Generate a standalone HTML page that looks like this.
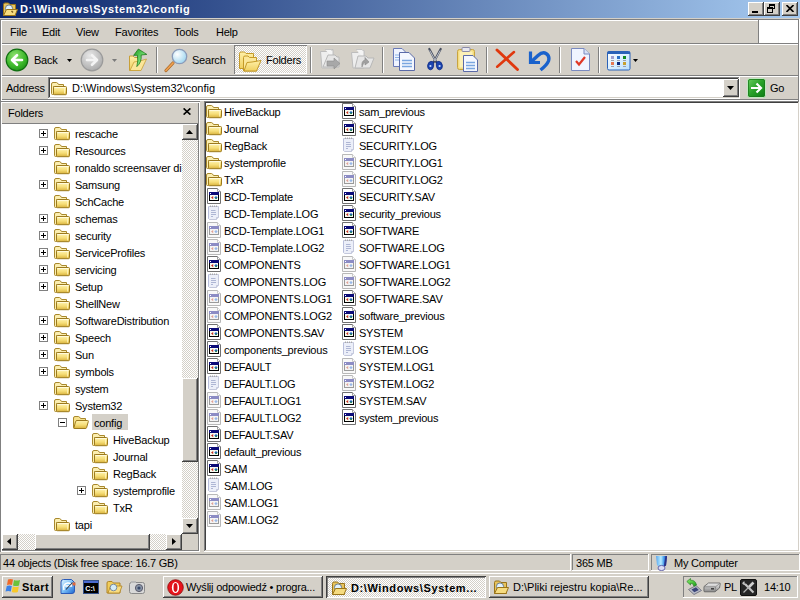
<!DOCTYPE html>
<html><head><meta charset="utf-8">
<style>
html,body{margin:0;padding:0;}
body{width:800px;height:600px;overflow:hidden;position:relative;background:#d4d0c8;font-family:"Liberation Sans", sans-serif;font-size:11px;color:#000;}
div,span,svg{position:absolute;box-sizing:border-box;}
.t{white-space:nowrap;line-height:15px;letter-spacing:-0.22px;}
.ic{width:16px;height:16px;}
</style></head><body>
<svg width="0" height="0" style="position:absolute">
<defs>
<linearGradient id="fg" x1="0" y1="0" x2="0" y2="1"><stop offset="0" stop-color="#fff3b0"/><stop offset=".55" stop-color="#f6de78"/><stop offset="1" stop-color="#d9b23c"/></linearGradient>
<linearGradient id="fgh" x1="0" y1="0" x2="1" y2="0"><stop offset="0" stop-color="#f6dc78"/><stop offset=".5" stop-color="#fff2b0"/><stop offset="1" stop-color="#e9c550"/></linearGradient>
<symbol id="fold" viewBox="0 0 16 16">
<path d="M0.5 4 V13.5 Q0.5 14.5 1.5 14.5 H2.5 V6.5 H12.5 V4.5 H7.5 L6.5 3 Q6 2.5 5.5 2.5 H2 Q0.5 2.5 0.5 4Z" fill="#fbeeb0" stroke="#a8882c"/>
<rect x="2.5" y="6.5" width="13" height="8.2" rx="1" fill="url(#fg)" stroke="#9c7a1e"/>
<path d="M3.5 7.6 H14.5" stroke="#fffbe0"/>
<path d="M13.5 8 V13.5" stroke="#fff5c0" stroke-width=".8"/>
</symbol>
<symbol id="reg" viewBox="0 0 16 16">
<path d="M1.5 0.5 H11.5 L14.5 3.5 V15.5 H1.5Z" fill="#fff" stroke="#707070"/>
<path d="M11.5 .5 V3.5 H14.5" fill="#fff" stroke="#a0a0a0"/>
<rect x="3.5" y="4.5" width="9" height="8" fill="#f6faf0" stroke="#000"/>
<rect x="3" y="4" width="10" height="3" fill="#0c0c78"/>
<rect x="4" y="5" width="1" height="1" fill="#fff"/>
<path d="M5 9.6 L7.2 8 V11.2Z" fill="#c83020"/>
<path d="M10 8 L11.7 9.6 L10 11.2 L8.3 9.6Z" fill="#2060d0"/>
<rect x="9.4" y="9.6" width="1.4" height="1.4" fill="#208a30"/>
</symbol>
<symbol id="regf" viewBox="0 0 16 16">
<path d="M1.5 0.5 H11.5 L14.5 3.5 V15.5 H1.5Z" fill="#f8f8f8" stroke="#b8b8b8"/>
<path d="M11.5 .5 V3.5 H14.5" fill="#fff" stroke="#c8c8c8"/>
<rect x="3.5" y="4.5" width="9" height="8" fill="#f4f4f4" stroke="#9a9a9a"/>
<rect x="3" y="4" width="10" height="3" fill="#8c8cc4"/>
<rect x="4" y="5" width="1" height="1" fill="#fff"/>
<path d="M5 9.6 L7.2 8 V11.2Z" fill="#e0a094"/>
<path d="M10 8 L11.7 9.6 L10 11.2 L8.3 9.6Z" fill="#98b8e8"/>
</symbol>
<symbol id="txt" viewBox="0 0 16 16">
<path d="M2.5 1.5 H12.5 V12.5 L10.5 14.5 H3.5 L2.5 13.5Z" fill="#eceff9" stroke="#c4c8dc"/>
<path d="M2.5 2 V13.5" stroke="#b8bedb"/>
<path d="M4.5 0.5 V2 M6.5 0.5 V2 M8.5 0.5 V2 M10.5 0.5 V2" stroke="#a8a8a8"/>
<path d="M5 5.5 H9.5 M5 7.5 H10 M5 9.5 H10 M5 11.5 H7" stroke="#aeb6d4"/>
<path d="M10.5 14.5 V12.5 H12.5" fill="#dfe3f2" stroke="#c4c8dc"/>
</symbol>
</defs></svg>
<div style="left:0;top:0;width:800px;height:18px;background:linear-gradient(to right,#0a246a,#a6caf0);"></div><svg style="left:2px;top:1px" width="16" height="16" viewBox="0 0 16 16"><path d="M1.5 3.5 Q1.5 2 3 2 H6.5 L8 3.5 H13.5 V14.5 H1.5Z" fill="#e8c45c" stroke="#9a7418"/><circle cx="7" cy="7.5" r="3.6" fill="#dff2ff" stroke="#6a7a8a"/><path d="M1.5 14.5 L4.5 8.5 H15.5 L13 14.5Z" fill="#f6dc80" stroke="#9a7418"/><path d="M9.5 10 L11 11.5" stroke="#7a5a18" stroke-width="1.4"/></svg><div class="t" style="left:20px;top:2px;color:#fff;font-weight:bold;font-size:11px;letter-spacing:0.66px">D:\Windows\System32\config</div><div style="left:748px;top:2px;width:16px;height:14px;background:#d4d0c8;box-shadow: inset -1px -1px #404040, inset 1px 1px #fff, inset -2px -2px #808080, inset 2px 2px #d4d0c8;"><div style="left:4px;top:9px;width:6px;height:2px;background:#000"></div></div><div style="left:764px;top:2px;width:16px;height:14px;background:#d4d0c8;box-shadow: inset -1px -1px #404040, inset 1px 1px #fff, inset -2px -2px #808080, inset 2px 2px #d4d0c8;"><div style="left:5px;top:2px;width:6px;height:5px;border:1px solid #000;border-top-width:2px"></div><div style="left:3px;top:5px;width:6px;height:6px;border:1px solid #000;border-top-width:2px;background:#d4d0c8"></div></div><div style="left:782px;top:2px;width:16px;height:14px;background:#d4d0c8;box-shadow: inset -1px -1px #404040, inset 1px 1px #fff, inset -2px -2px #808080, inset 2px 2px #d4d0c8;"><svg style="left:4px;top:3px" width="8" height="7" viewBox="0 0 8 7"><path d="M0.5 0 L7.5 7 M7.5 0 L0.5 7" stroke="#000" stroke-width="1.6"/></svg></div><div style="left:0;top:18px;width:800px;height:582px;background:#d4d0c8"></div><div style="left:0px;top:19px;width:800px;height:1px;background:#808080"></div><div style="left:0px;top:20px;width:800px;height:1px;background:#fff"></div><div style="left:0px;top:43px;width:800px;height:1px;background:#808080"></div><div style="left:0px;top:44px;width:800px;height:1px;background:#fff"></div><div style="left:0px;top:75px;width:800px;height:1px;background:#808080"></div><div style="left:0px;top:76px;width:800px;height:1px;background:#fff"></div><div style="left:0px;top:99px;width:800px;height:1px;background:#808080"></div><div style="left:0px;top:100px;width:800px;height:1px;background:#fff"></div><div style="left:0px;top:19px;width:1px;height:82px;background:#808080"></div><div style="left:1px;top:20px;width:1px;height:80px;background:#fff"></div><div style="left:798px;top:19px;width:1px;height:82px;background:#808080"></div><div style="left:799px;top:19px;width:1px;height:82px;background:#fff"></div><div style="left:759px;top:20px;width:39px;height:23px;background:#fff"></div><div style="left:758px;top:20px;width:1px;height:23px;background:#808080"></div><div class="t" style="left:10px;top:25px">File</div><div class="t" style="left:42px;top:25px">Edit</div><div class="t" style="left:76px;top:25px">View</div><div class="t" style="left:115px;top:25px">Favorites</div><div class="t" style="left:174px;top:25px">Tools</div><div class="t" style="left:216px;top:25px">Help</div><svg style="left:5px;top:48px" width="24" height="24" viewBox="0 0 24 24"><defs><radialGradient id="gb" cx=".4" cy=".3" r=".8"><stop offset="0" stop-color="#8fe070"/><stop offset=".6" stop-color="#3cb82a"/><stop offset="1" stop-color="#1a8a14"/></radialGradient></defs><circle cx="12" cy="12" r="10.8" fill="url(#gb)" stroke="#0f6e10" stroke-width="1.2"/><path d="M17 12 H8 M12 7.2 L7 12 L12 16.8" stroke="#fff" stroke-width="2.6" fill="none" stroke-linecap="round" stroke-linejoin="round"/></svg><div class="t" style="left:34px;top:53px">Back</div><svg style="left:67px;top:59px" width="5" height="3"><path d="M0 0H5L2.5 3Z" fill="#000"/></svg><svg style="left:80px;top:48px" width="24" height="24" viewBox="0 0 24 24"><defs><radialGradient id="gf" cx=".4" cy=".3" r=".8"><stop offset="0" stop-color="#e8e8e8"/><stop offset="1" stop-color="#a4a4a4"/></radialGradient></defs><circle cx="12" cy="12" r="10.8" fill="url(#gf)" stroke="#9a9a9a" stroke-width="1.2"/><path d="M7 12 H16 M12 7.2 L17 12 L12 16.8" stroke="#f4f4f4" stroke-width="2.6" fill="none" stroke-linecap="round" stroke-linejoin="round"/></svg><svg style="left:112px;top:59px" width="5" height="3"><path d="M0 0H5L2.5 3Z" fill="#7a7a7a"/></svg><svg style="left:128px;top:48px" width="20" height="24" viewBox="0 0 20 24"><defs><linearGradient id="ga" x1="0" y1="0" x2="1" y2="1"><stop offset="0" stop-color="#1a9a1a"/><stop offset=".6" stop-color="#7ae07a"/><stop offset="1" stop-color="#108010"/></linearGradient><linearGradient id="gyf" x1="0" y1="0" x2="0" y2="1"><stop offset="0" stop-color="#fff0a8"/><stop offset="1" stop-color="#f0d060"/></linearGradient></defs><path d="M1.5 8 H5 L6.5 9.5 H11.5 V22.5 H1.5Z" fill="url(#gyf)" stroke="#c8a038"/><path d="M2 22.5 L6 14 L12 13 L18.5 11 L13 22.5Z" fill="#fbe69a" stroke="#c8a038" stroke-width=".8"/><path d="M10.4 1 L5.6 7.4 L9.4 7.2 Q10.4 13 8.8 18.6 Q13.8 14.5 13.2 7 L18.8 6.4 Z" fill="url(#ga)" stroke="#0e6e0e" stroke-width=".7"/></svg><div style="left:156px;top:47px;width:2px;height:26px;border-left:1px solid #808080;border-right:1px solid #fff"></div><svg style="left:163px;top:47px" width="26" height="26" viewBox="0 0 26 26"><defs><radialGradient id="gl" cx=".35" cy=".35" r=".7"><stop offset="0" stop-color="#fff"/><stop offset="1" stop-color="#9fd6f0"/></radialGradient></defs><path d="M3 23.5 L10 16" stroke="#a86a2a" stroke-width="3.2" stroke-linecap="round"/><path d="M3 23.5 L10 16" stroke="#f0a050" stroke-width="1.8" stroke-linecap="round"/><circle cx="16.5" cy="9.5" r="7.2" fill="url(#gl)" stroke="#8a9ab8" stroke-width="1.3"/></svg><div class="t" style="left:192px;top:53px">Search</div><div style="left:234px;top:45px;width:73px;height:29px;background: repeating-conic-gradient(#fff 0 25%, #d4d0c8 0 50%) 0 0/2px 2px; box-shadow: inset 1px 1px #808080, inset -1px -1px #fff;"></div><svg style="left:238px;top:49px" width="24" height="24" viewBox="0 0 24 24"><path d="M1.5 4.5 Q1.5 3 3 3 H6.5 L8 4.5 H15.5 V19.5 H1.5Z" fill="url(#gyf)" stroke="#c49a28"/><path d="M5.5 8.5 Q5.5 7 7 7 H10 L11.5 8.5 H18.5 V22 H5.5Z" fill="#fbe79a" stroke="#c49a28"/><path d="M6 22 L9 13.5 L14 13 L23 11.5 L18.5 22Z" fill="url(#gyf)" stroke="#c49a28"/></svg><div class="t" style="left:266px;top:53px">Folders</div><div style="left:310px;top:47px;width:2px;height:26px;border-left:1px solid #808080;border-right:1px solid #fff"></div><svg style="left:319px;top:48px" width="24" height="23" viewBox="0 0 24 23"><path d="M1.5 3.5 H8 L10 1.5 H14 V20 H3 Z" fill="#eeeeee" stroke="#bdbdbd"/><path d="M6 1.5 H12 L14 3.5 V10" fill="#f4f4f4" stroke="#c4c4c4"/><path d="M9 7 H16 L18 9 H20 V19 H4Z" fill="#e6e6e6" stroke="#b8b8b8"/><path d="M8 13 H15 V10 L21 15.5 L15 21 V18 H8Z" fill="#a8a8a8" stroke="#8a8a8a" stroke-width=".6"/></svg><svg style="left:350px;top:48px" width="25" height="23" viewBox="0 0 25 23"><path d="M1.5 4.5 H8 L10 2.5 H14 V20 H3 Z" fill="#eeeeee" stroke="#bdbdbd"/><path d="M6 1.5 H12 L14 3.5 V10" fill="#f4f4f4" stroke="#c4c4c4"/><path d="M8 8 H16 L18 10 H24 L20 20 H5Z" fill="#e6e6e6" stroke="#b8b8b8"/><path d="M12 19 Q11 13 15 12 V9.5 L19 14 L15 17 V14.5 Q13 15 12 19Z" fill="#a0a0a0" stroke="#888" stroke-width=".6"/></svg><div style="left:382px;top:47px;width:2px;height:26px;border-left:1px solid #808080;border-right:1px solid #fff"></div><svg style="left:392px;top:47px" width="24" height="25" viewBox="0 0 24 25"><path d="M1.5 1.5 H10 L14.5 6 V19.5 H1.5Z" fill="#f0f4ff" stroke="#6a7ab8"/><path d="M3 8 H11 M3 10.5 H11 M3 13 H11" stroke="#8cb4e8"/><path d="M7.5 5.5 H17 L22.5 11 V23.5 H7.5Z" fill="#f4f7ff" stroke="#5a6aa8"/><path d="M10 13.5 H20 M10 16.5 H20 M10 19.5 H20" stroke="#7aa6e0" stroke-width="1.4"/></svg><svg style="left:425px;top:47px" width="20" height="25" viewBox="0 0 20 25"><path d="M4.3 2 L11.2 15 M15.7 2 L8.8 15" stroke="#4a5060" stroke-width="2.2" fill="none" stroke-linecap="round"/><path d="M4.8 3.5 L10.6 14 M15.2 3.5 L9.4 14" stroke="#e8eef8" stroke-width=".7" fill="none"/><path d="M8.6 15 Q6 13.5 3.8 15.5 Q1.6 18.5 3.2 21.6 Q5.2 23.8 7.4 22 Q9.2 20 8.6 15Z" fill="#1b44b0" stroke="#0e2a80" stroke-width=".8"/><path d="M11.4 15 Q14 13.5 16.2 15.5 Q18.4 18.5 16.8 21.6 Q14.8 23.8 12.6 22 Q10.8 20 11.4 15Z" fill="#1b44b0" stroke="#0e2a80" stroke-width=".8"/><circle cx="5.4" cy="19" r="1.1" fill="#c8dcff"/><circle cx="14.6" cy="19" r="1.1" fill="#c8dcff"/></svg><svg style="left:456px;top:46px" width="23" height="27" viewBox="0 0 23 27"><rect x="1.5" y="3.5" width="17" height="20" rx="2" fill="#f4dc80" stroke="#c8a440"/><rect x="3.5" y="5.5" width="13" height="16" fill="#fbf0b8"/><rect x="6" y="1.5" width="8" height="4" rx="1" fill="#e8e8f0" stroke="#8a8aa8"/><path d="M7.5 9.5 H17 L21.5 14 V25.5 H7.5Z" fill="#f4f7ff" stroke="#5a6aa8"/><path d="M10 16.5 H19 M10 19.5 H19 M10 22.5 H19" stroke="#7aa6e0" stroke-width="1.4"/></svg><div style="left:486px;top:47px;width:2px;height:26px;border-left:1px solid #808080;border-right:1px solid #fff"></div><svg style="left:495px;top:48px" width="24" height="23" viewBox="0 0 24 23"><path d="M2 2 L22.5 21.5" stroke="#e0380e" stroke-width="2.9" stroke-linecap="round"/><path d="M19 4 L2.2 18.8" stroke="#e0380e" stroke-width="2.5" stroke-linecap="round"/></svg><svg style="left:527px;top:48px" width="24" height="24" viewBox="0 0 24 24"><path d="M3.5 3.5 V14.5 H13" stroke="#1a62cc" stroke-width="3.2" fill="none" stroke-linejoin="miter"/><path d="M4.5 13.5 L11 7.5 Q15.5 3.5 19 5.5 Q23 8 21.5 13 Q20 17 13.5 22" stroke="#1a62cc" stroke-width="3.4" fill="none"/></svg><div style="left:559px;top:47px;width:2px;height:26px;border-left:1px solid #808080;border-right:1px solid #fff"></div><svg style="left:570px;top:47px" width="21" height="25" viewBox="0 0 21 25"><path d="M1.5 1.5 H14 L19.5 7 V23.5 H1.5Z" fill="#f0f4ff" stroke="#7a8ac0"/><path d="M14 1.5 V7 H19.5" fill="#d8e2f8" stroke="#7a8ac0"/><path d="M6 14 L9 17.5 L15 10" stroke="#e03828" stroke-width="2.2" fill="none"/></svg><div style="left:598px;top:47px;width:2px;height:26px;border-left:1px solid #808080;border-right:1px solid #fff"></div><svg style="left:606px;top:50px" width="26" height="21" viewBox="0 0 26 21"><defs><linearGradient id="gvw" x1="0" y1="0" x2="1" y2="1"><stop offset="0" stop-color="#fff"/><stop offset="1" stop-color="#b8e0ff"/></linearGradient></defs><rect x="1.5" y="1.5" width="22.5" height="18.5" rx="1.5" fill="url(#gvw)" stroke="#2a62b8"/><rect x="1.5" y="1.5" width="22.5" height="2.5" fill="#2a62b8"/><rect x="5" y="6" width="3" height="3" fill="#a0a0d0"/><rect x="11" y="6" width="3" height="3" fill="#2a70c8"/><rect x="17" y="6" width="3" height="3" fill="#108a20"/><rect x="5" y="12" width="3" height="3" fill="#e87850"/><rect x="11" y="12" width="3" height="3" fill="#0a2a80"/><rect x="17" y="12" width="3" height="3" fill="#c8a030"/><path d="M5 10.5 H8 M11 10.5 H14 M17 10.5 H20 M5 16.5 H8 M11 16.5 H14 M17 16.5 H20" stroke="#a0a0a8"/></svg><svg style="left:633px;top:59px" width="5" height="3"><path d="M0 0H5L2.5 3Z" fill="#000"/></svg><div class="t" style="left:6px;top:81px">Address</div><div style="left:48px;top:77px;width:692px;height:22px;background:#fff;box-shadow: inset -1px -1px #fff, inset 1px 1px #808080, inset -2px -2px #d4d0c8, inset 2px 2px #404040;"></div><svg class="ic" style="left:51px;top:80px" viewBox="0 0 16 16"><use href="#fold"/></svg><div class="t" style="left:72px;top:81px;letter-spacing:0">D:\Windows\System32\config</div><div style="left:723px;top:79px;width:16px;height:18px;background:#d4d0c8;box-shadow: inset -1px -1px #404040, inset 1px 1px #fff, inset -2px -2px #808080, inset 2px 2px #d4d0c8;"><svg style="left:4px;top:7px" width="7" height="4"><path d="M0 0H7L3.5 4Z" fill="#000"/></svg></div><svg style="left:747px;top:78px" width="19" height="20" viewBox="0 0 19 20"><defs><linearGradient id="gg" x1="0" y1="0" x2="1" y2="1"><stop offset="0" stop-color="#6ad060"/><stop offset=".5" stop-color="#28a028"/><stop offset="1" stop-color="#0a7a14"/></linearGradient></defs><rect x=".5" y=".5" width="18" height="19" rx="2.5" fill="url(#gg)" stroke="#c0e8c0"/><rect x="1.5" y="1.5" width="16" height="17" rx="1.5" fill="none" stroke="#1a7a1a" stroke-width=".8"/><path d="M4 10 H14 M9.5 5.5 L14 10 L9.5 14.5" stroke="#fff" stroke-width="2.2" fill="none"/></svg><div class="t" style="left:770px;top:81px">Go</div><div style="left:0;top:101px;width:200px;height:451px;box-shadow: inset 1px 1px #808080, inset -1px -1px #fff, inset 2px 2px #fff, inset -2px -2px #808080;"></div><div class="t" style="left:8px;top:106px">Folders</div><svg style="left:183px;top:108px" width="8" height="7"><path d="M0.6 0.4 L7.4 6.6 M7.4 0.4 L0.6 6.6" stroke="#000" stroke-width="1.6"/></svg><div style="left:2px;top:123px;width:196px;height:1px;background:#808080"></div><div style="left:2px;top:124px;width:180px;height:410px;background:#fff"></div><div style="left:2px;top:124px;width:180px;height:410px;overflow:hidden"><div style="left:37px;top:5px;width:9px;height:9px;border:1px solid #808080;background:#fff"><div style="left:1px;top:3px;width:5px;height:1px;background:#000"></div><div style="left:3px;top:1px;width:1px;height:5px;background:#000"></div></div><svg class="ic" style="left:52px;top:1px"><use href="#fold"/></svg><div class="t" style="left:73px;top:3px">rescache</div><div style="left:37px;top:22px;width:9px;height:9px;border:1px solid #808080;background:#fff"><div style="left:1px;top:3px;width:5px;height:1px;background:#000"></div><div style="left:3px;top:1px;width:1px;height:5px;background:#000"></div></div><svg class="ic" style="left:52px;top:18px"><use href="#fold"/></svg><div class="t" style="left:73px;top:20px">Resources</div><svg class="ic" style="left:52px;top:35px"><use href="#fold"/></svg><div class="t" style="left:73px;top:37px">ronaldo screensaver di</div><div style="left:37px;top:56px;width:9px;height:9px;border:1px solid #808080;background:#fff"><div style="left:1px;top:3px;width:5px;height:1px;background:#000"></div><div style="left:3px;top:1px;width:1px;height:5px;background:#000"></div></div><svg class="ic" style="left:52px;top:52px"><use href="#fold"/></svg><div class="t" style="left:73px;top:54px">Samsung</div><svg class="ic" style="left:52px;top:69px"><use href="#fold"/></svg><div class="t" style="left:73px;top:71px">SchCache</div><div style="left:37px;top:90px;width:9px;height:9px;border:1px solid #808080;background:#fff"><div style="left:1px;top:3px;width:5px;height:1px;background:#000"></div><div style="left:3px;top:1px;width:1px;height:5px;background:#000"></div></div><svg class="ic" style="left:52px;top:86px"><use href="#fold"/></svg><div class="t" style="left:73px;top:88px">schemas</div><div style="left:37px;top:107px;width:9px;height:9px;border:1px solid #808080;background:#fff"><div style="left:1px;top:3px;width:5px;height:1px;background:#000"></div><div style="left:3px;top:1px;width:1px;height:5px;background:#000"></div></div><svg class="ic" style="left:52px;top:103px"><use href="#fold"/></svg><div class="t" style="left:73px;top:105px">security</div><div style="left:37px;top:124px;width:9px;height:9px;border:1px solid #808080;background:#fff"><div style="left:1px;top:3px;width:5px;height:1px;background:#000"></div><div style="left:3px;top:1px;width:1px;height:5px;background:#000"></div></div><svg class="ic" style="left:52px;top:120px"><use href="#fold"/></svg><div class="t" style="left:73px;top:122px">ServiceProfiles</div><div style="left:37px;top:141px;width:9px;height:9px;border:1px solid #808080;background:#fff"><div style="left:1px;top:3px;width:5px;height:1px;background:#000"></div><div style="left:3px;top:1px;width:1px;height:5px;background:#000"></div></div><svg class="ic" style="left:52px;top:137px"><use href="#fold"/></svg><div class="t" style="left:73px;top:139px">servicing</div><div style="left:37px;top:158px;width:9px;height:9px;border:1px solid #808080;background:#fff"><div style="left:1px;top:3px;width:5px;height:1px;background:#000"></div><div style="left:3px;top:1px;width:1px;height:5px;background:#000"></div></div><svg class="ic" style="left:52px;top:154px"><use href="#fold"/></svg><div class="t" style="left:73px;top:156px">Setup</div><svg class="ic" style="left:52px;top:171px"><use href="#fold"/></svg><div class="t" style="left:73px;top:173px">ShellNew</div><div style="left:37px;top:192px;width:9px;height:9px;border:1px solid #808080;background:#fff"><div style="left:1px;top:3px;width:5px;height:1px;background:#000"></div><div style="left:3px;top:1px;width:1px;height:5px;background:#000"></div></div><svg class="ic" style="left:52px;top:188px"><use href="#fold"/></svg><div class="t" style="left:73px;top:190px">SoftwareDistribution</div><div style="left:37px;top:209px;width:9px;height:9px;border:1px solid #808080;background:#fff"><div style="left:1px;top:3px;width:5px;height:1px;background:#000"></div><div style="left:3px;top:1px;width:1px;height:5px;background:#000"></div></div><svg class="ic" style="left:52px;top:205px"><use href="#fold"/></svg><div class="t" style="left:73px;top:207px">Speech</div><div style="left:37px;top:226px;width:9px;height:9px;border:1px solid #808080;background:#fff"><div style="left:1px;top:3px;width:5px;height:1px;background:#000"></div><div style="left:3px;top:1px;width:1px;height:5px;background:#000"></div></div><svg class="ic" style="left:52px;top:222px"><use href="#fold"/></svg><div class="t" style="left:73px;top:224px">Sun</div><div style="left:37px;top:243px;width:9px;height:9px;border:1px solid #808080;background:#fff"><div style="left:1px;top:3px;width:5px;height:1px;background:#000"></div><div style="left:3px;top:1px;width:1px;height:5px;background:#000"></div></div><svg class="ic" style="left:52px;top:239px"><use href="#fold"/></svg><div class="t" style="left:73px;top:241px">symbols</div><svg class="ic" style="left:52px;top:256px"><use href="#fold"/></svg><div class="t" style="left:73px;top:258px">system</div><div style="left:37px;top:277px;width:9px;height:9px;border:1px solid #808080;background:#fff"><div style="left:1px;top:3px;width:5px;height:1px;background:#000"></div><div style="left:3px;top:1px;width:1px;height:5px;background:#000"></div></div><svg class="ic" style="left:52px;top:273px"><use href="#fold"/></svg><div class="t" style="left:73px;top:275px">System32</div><div style="left:56px;top:294px;width:9px;height:9px;border:1px solid #808080;background:#fff"><div style="left:1px;top:3px;width:5px;height:1px;background:#000"></div></div><div style="left:90px;top:290px;width:36px;height:16px;background:#d4d0c8"></div><svg class="ic" style="left:71px;top:290px" viewBox="0 0 16 16"><path d="M0.5 4 V13.5 Q0.5 14.5 1.5 14.5 H12.5 V4.5 H7.5 L6.5 3 Q6 2.5 5.5 2.5 H2 Q0.5 2.5 0.5 4Z" fill="#f6e08a" stroke="#a8882c"/><path d="M1.5 14.5 Q0.8 14.5 1 13.5 L2.5 7.8 Q2.8 6.5 4 6.5 H14.5 Q15.6 6.5 15.3 7.6 L13.6 13.6 Q13.3 14.5 12.5 14.5Z" fill="url(#fg)" stroke="#9c7a1e"/></svg><div class="t" style="left:92px;top:292px">config</div><svg class="ic" style="left:90px;top:307px"><use href="#fold"/></svg><div class="t" style="left:111px;top:309px">HiveBackup</div><svg class="ic" style="left:90px;top:324px"><use href="#fold"/></svg><div class="t" style="left:111px;top:326px">Journal</div><svg class="ic" style="left:90px;top:341px"><use href="#fold"/></svg><div class="t" style="left:111px;top:343px">RegBack</div><div style="left:75px;top:362px;width:9px;height:9px;border:1px solid #808080;background:#fff"><div style="left:1px;top:3px;width:5px;height:1px;background:#000"></div><div style="left:3px;top:1px;width:1px;height:5px;background:#000"></div></div><svg class="ic" style="left:90px;top:358px"><use href="#fold"/></svg><div class="t" style="left:111px;top:360px">systemprofile</div><svg class="ic" style="left:90px;top:375px"><use href="#fold"/></svg><div class="t" style="left:111px;top:377px">TxR</div><svg class="ic" style="left:52px;top:392px"><use href="#fold"/></svg><div class="t" style="left:73px;top:394px">tapi</div></div><div style="left:182px;top:124px;width:16px;height:410px;background: repeating-conic-gradient(#fff 0 25%, #d4d0c8 0 50%) 0 0/2px 2px;"></div><div style="left:182px;top:124px;width:16px;height:16px;background:#d4d0c8;box-shadow: inset -1px -1px #404040, inset 1px 1px #fff, inset -2px -2px #808080, inset 2px 2px #d4d0c8;"><svg style="left:4px;top:6px" width="7" height="4"><path d="M0 4H7L3.5 0Z" fill="#000"/></svg></div><div style="left:182px;top:518px;width:16px;height:16px;background:#d4d0c8;box-shadow: inset -1px -1px #404040, inset 1px 1px #fff, inset -2px -2px #808080, inset 2px 2px #d4d0c8;"><svg style="left:4px;top:6px" width="7" height="4"><path d="M0 0H7L3.5 4Z" fill="#000"/></svg></div><div style="left:182px;top:378px;width:16px;height:84px;background:#d4d0c8;box-shadow: inset -1px -1px #404040, inset 1px 1px #fff, inset -2px -2px #808080, inset 2px 2px #d4d0c8;"></div><div style="left:2px;top:534px;width:180px;height:16px;background: repeating-conic-gradient(#fff 0 25%, #d4d0c8 0 50%) 0 0/2px 2px;"></div><div style="left:2px;top:534px;width:16px;height:16px;background:#d4d0c8;box-shadow: inset -1px -1px #404040, inset 1px 1px #fff, inset -2px -2px #808080, inset 2px 2px #d4d0c8;"><svg style="left:5px;top:4px" width="4" height="7"><path d="M4 0V7L0 3.5Z" fill="#000"/></svg></div><div style="left:166px;top:534px;width:16px;height:16px;background:#d4d0c8;box-shadow: inset -1px -1px #404040, inset 1px 1px #fff, inset -2px -2px #808080, inset 2px 2px #d4d0c8;"><svg style="left:6px;top:4px" width="4" height="7"><path d="M0 0V7L4 3.5Z" fill="#000"/></svg></div><div style="left:35px;top:534px;width:115px;height:16px;background:#d4d0c8;box-shadow: inset -1px -1px #404040, inset 1px 1px #fff, inset -2px -2px #808080, inset 2px 2px #d4d0c8;"></div><div style="left:182px;top:534px;width:16px;height:16px;background:#d4d0c8"></div><div style="left:204px;top:101px;width:596px;height:451px;background:#fff;box-shadow: inset -1px -1px #fff, inset 1px 1px #808080, inset -2px -2px #d4d0c8, inset 2px 2px #404040;"></div><svg class="ic" style="left:206px;top:103px"><use href="#fold"/></svg><div class="t" style="left:224px;top:105px">HiveBackup</div><svg class="ic" style="left:206px;top:120px"><use href="#fold"/></svg><div class="t" style="left:224px;top:122px">Journal</div><svg class="ic" style="left:206px;top:137px"><use href="#fold"/></svg><div class="t" style="left:224px;top:139px">RegBack</div><svg class="ic" style="left:206px;top:154px"><use href="#fold"/></svg><div class="t" style="left:224px;top:156px">systemprofile</div><svg class="ic" style="left:206px;top:171px"><use href="#fold"/></svg><div class="t" style="left:224px;top:173px">TxR</div><svg class="ic" style="left:206px;top:188px"><use href="#reg"/></svg><div class="t" style="left:224px;top:190px">BCD-Template</div><svg class="ic" style="left:206px;top:205px"><use href="#txt"/></svg><div class="t" style="left:224px;top:207px">BCD-Template.LOG</div><svg class="ic" style="left:206px;top:222px"><use href="#regf"/></svg><div class="t" style="left:224px;top:224px">BCD-Template.LOG1</div><svg class="ic" style="left:206px;top:239px"><use href="#regf"/></svg><div class="t" style="left:224px;top:241px">BCD-Template.LOG2</div><svg class="ic" style="left:206px;top:256px"><use href="#reg"/></svg><div class="t" style="left:224px;top:258px">COMPONENTS</div><svg class="ic" style="left:206px;top:273px"><use href="#txt"/></svg><div class="t" style="left:224px;top:275px">COMPONENTS.LOG</div><svg class="ic" style="left:206px;top:290px"><use href="#regf"/></svg><div class="t" style="left:224px;top:292px">COMPONENTS.LOG1</div><svg class="ic" style="left:206px;top:307px"><use href="#regf"/></svg><div class="t" style="left:224px;top:309px">COMPONENTS.LOG2</div><svg class="ic" style="left:206px;top:324px"><use href="#reg"/></svg><div class="t" style="left:224px;top:326px">COMPONENTS.SAV</div><svg class="ic" style="left:206px;top:341px"><use href="#reg"/></svg><div class="t" style="left:224px;top:343px">components_previous</div><svg class="ic" style="left:206px;top:358px"><use href="#reg"/></svg><div class="t" style="left:224px;top:360px">DEFAULT</div><svg class="ic" style="left:206px;top:375px"><use href="#txt"/></svg><div class="t" style="left:224px;top:377px">DEFAULT.LOG</div><svg class="ic" style="left:206px;top:392px"><use href="#regf"/></svg><div class="t" style="left:224px;top:394px">DEFAULT.LOG1</div><svg class="ic" style="left:206px;top:409px"><use href="#regf"/></svg><div class="t" style="left:224px;top:411px">DEFAULT.LOG2</div><svg class="ic" style="left:206px;top:426px"><use href="#reg"/></svg><div class="t" style="left:224px;top:428px">DEFAULT.SAV</div><svg class="ic" style="left:206px;top:443px"><use href="#reg"/></svg><div class="t" style="left:224px;top:445px">default_previous</div><svg class="ic" style="left:206px;top:460px"><use href="#reg"/></svg><div class="t" style="left:224px;top:462px">SAM</div><svg class="ic" style="left:206px;top:477px"><use href="#txt"/></svg><div class="t" style="left:224px;top:479px">SAM.LOG</div><svg class="ic" style="left:206px;top:494px"><use href="#regf"/></svg><div class="t" style="left:224px;top:496px">SAM.LOG1</div><svg class="ic" style="left:206px;top:511px"><use href="#regf"/></svg><div class="t" style="left:224px;top:513px">SAM.LOG2</div><svg class="ic" style="left:341px;top:103px"><use href="#reg"/></svg><div class="t" style="left:359px;top:105px">sam_previous</div><svg class="ic" style="left:341px;top:120px"><use href="#reg"/></svg><div class="t" style="left:359px;top:122px">SECURITY</div><svg class="ic" style="left:341px;top:137px"><use href="#txt"/></svg><div class="t" style="left:359px;top:139px">SECURITY.LOG</div><svg class="ic" style="left:341px;top:154px"><use href="#regf"/></svg><div class="t" style="left:359px;top:156px">SECURITY.LOG1</div><svg class="ic" style="left:341px;top:171px"><use href="#regf"/></svg><div class="t" style="left:359px;top:173px">SECURITY.LOG2</div><svg class="ic" style="left:341px;top:188px"><use href="#reg"/></svg><div class="t" style="left:359px;top:190px">SECURITY.SAV</div><svg class="ic" style="left:341px;top:205px"><use href="#reg"/></svg><div class="t" style="left:359px;top:207px">security_previous</div><svg class="ic" style="left:341px;top:222px"><use href="#reg"/></svg><div class="t" style="left:359px;top:224px">SOFTWARE</div><svg class="ic" style="left:341px;top:239px"><use href="#txt"/></svg><div class="t" style="left:359px;top:241px">SOFTWARE.LOG</div><svg class="ic" style="left:341px;top:256px"><use href="#regf"/></svg><div class="t" style="left:359px;top:258px">SOFTWARE.LOG1</div><svg class="ic" style="left:341px;top:273px"><use href="#regf"/></svg><div class="t" style="left:359px;top:275px">SOFTWARE.LOG2</div><svg class="ic" style="left:341px;top:290px"><use href="#reg"/></svg><div class="t" style="left:359px;top:292px">SOFTWARE.SAV</div><svg class="ic" style="left:341px;top:307px"><use href="#reg"/></svg><div class="t" style="left:359px;top:309px">software_previous</div><svg class="ic" style="left:341px;top:324px"><use href="#reg"/></svg><div class="t" style="left:359px;top:326px">SYSTEM</div><svg class="ic" style="left:341px;top:341px"><use href="#txt"/></svg><div class="t" style="left:359px;top:343px">SYSTEM.LOG</div><svg class="ic" style="left:341px;top:358px"><use href="#regf"/></svg><div class="t" style="left:359px;top:360px">SYSTEM.LOG1</div><svg class="ic" style="left:341px;top:375px"><use href="#regf"/></svg><div class="t" style="left:359px;top:377px">SYSTEM.LOG2</div><svg class="ic" style="left:341px;top:392px"><use href="#reg"/></svg><div class="t" style="left:359px;top:394px">SYSTEM.SAV</div><svg class="ic" style="left:341px;top:409px"><use href="#reg"/></svg><div class="t" style="left:359px;top:411px">system_previous</div><div style="left:0;top:554px;width:571px;height:17px;box-shadow: inset -1px -1px #fff, inset 1px 1px #808080;"></div><div class="t" style="left:3px;top:556px">44 objects (Disk free space: 16.7 GB)</div><div style="left:572px;top:554px;width:77px;height:17px;box-shadow: inset -1px -1px #fff, inset 1px 1px #808080;"></div><div class="t" style="left:576px;top:556px">365 MB</div><div style="left:651px;top:554px;width:149px;height:17px;box-shadow: inset -1px -1px #fff, inset 1px 1px #808080;"></div><svg style="left:655px;top:555px" width="13" height="16" viewBox="0 0 13 16"><defs><linearGradient id="gm" x1="0" y1="0" x2="1" y2="0"><stop offset="0" stop-color="#5aa8f0"/><stop offset=".45" stop-color="#b8ecff"/><stop offset=".75" stop-color="#3a90e8"/><stop offset="1" stop-color="#28328a"/></linearGradient></defs><path d="M1 1 H12 L11 10.5 L9 11.5 H3.5 L2 10Z" fill="url(#gm)"/><path d="M10.5 1 H12 L11 10.5 L9 12 V10Z" fill="#2a3088"/><ellipse cx="6.5" cy="13" rx="3.5" ry="2.6" fill="#dcdcf4" stroke="#4a4a9a" stroke-width=".8"/></svg><div class="t" style="left:674px;top:556px">My Computer</div><div style="left:0;top:572px;width:800px;height:28px;background:#d4d0c8;border-top:1px solid #d4d0c8;box-shadow: inset 0 1px #fff;"></div><div style="left:2px;top:576px;width:51px;height:22px;background:#d4d0c8;box-shadow: inset -1px -1px #404040, inset 1px 1px #fff, inset -2px -2px #808080, inset 2px 2px #d4d0c8;"></div><svg style="left:4px;top:578px" width="17" height="16" viewBox="0 0 17 16"><path d="M4 1.5 Q6.5 0.5 9 1.5 L8 7 Q5.5 6 3 7Z" fill="#f06a28"/><path d="M10 2 Q12.5 3 16 2 L15 7.5 Q12 8.5 9 7.5Z" fill="#6cc23a"/><path d="M2.8 8 Q5.3 7 7.8 8 L6.8 13.5 Q4.3 12.5 1.5 13.5Z" fill="#3a82e8"/><path d="M8.8 8.5 Q11.8 9.5 14.8 8.5 L13.8 14 Q11 15 7.8 14Z" fill="#f8c828"/></svg><div class="t" style="left:22px;top:580px;font-weight:bold;letter-spacing:0.4px">Start</div><svg style="left:60px;top:578px" width="16" height="17" viewBox="0 0 16 17"><defs><linearGradient id="gie" x1="0" y1="0" x2="1" y2="1"><stop offset="0" stop-color="#e0f4ff"/><stop offset=".5" stop-color="#7ac0f8"/><stop offset="1" stop-color="#1a64d0"/></linearGradient></defs><path d="M1 4 Q1 1.5 3.5 1.5 H11.5 L14.5 4.5 V13 Q14.5 15.5 12 15.5 H1Z" fill="url(#gie)" stroke="#2a5ab8"/><path d="M4 12 Q2.5 6 7.5 5 Q11 4.6 11.4 8 H5.2" fill="none" stroke="#fff" stroke-width="1.5"/><path d="M6 11.5 L12.5 4.5" stroke="#303848" stroke-width="1.1"/><rect x="12.5" y="4.5" width="3" height="3" fill="#e06838"/></svg><svg style="left:83px;top:580px" width="16" height="14" viewBox="0 0 16 14"><rect x=".5" y=".5" width="15" height="13" fill="#000" stroke="#34508a"/><rect x="1" y="1" width="14" height="2" fill="#4a6ad0"/><text x="2.2" y="10.6" font-size="7.2" fill="#fff" font-family="Liberation Sans" font-weight="bold">C:\</text></svg><svg style="left:106px;top:580px" width="17" height="14" viewBox="0 0 17 14"><path d="M1 3 Q1 1.5 2.5 1.5 H6 L7.5 3 H14 V13 H1Z" fill="#f0cc5a" stroke="#b08424"/><path d="M2 13 L4.5 6 H16 L13.5 13Z" fill="#f8dc80" stroke="#b08424" stroke-width=".8"/><circle cx="7.5" cy="7.5" r="3.3" fill="#d4ecf8" stroke="#7a8a9a"/></svg><svg style="left:129px;top:580px" width="16" height="14" viewBox="0 0 16 14"><rect x=".5" y="2.5" width="15" height="11" rx="2" fill="#d8d8d8" stroke="#8a8a8a"/><rect x="2" y="1" width="5" height="2" fill="#b8b8b8"/><circle cx="10" cy="8" r="3.6" fill="#8a96a8" stroke="#5a5a6a"/><circle cx="10" cy="8" r="1.6" fill="#3a4a6a"/></svg><div style="left:163px;top:576px;width:160px;height:22px;background:#d4d0c8;box-shadow: inset -1px -1px #404040, inset 1px 1px #fff, inset -2px -2px #808080, inset 2px 2px #d4d0c8;"></div><svg style="left:167px;top:579px" width="17" height="17" viewBox="0 0 17 17"><circle cx="8.5" cy="8.5" r="7.8" fill="#e8141c" stroke="#8a0a0a" stroke-width=".8"/><ellipse cx="8.5" cy="8.5" rx="3.6" ry="5.6" fill="#fff"/><ellipse cx="8.5" cy="8.5" rx="2" ry="4.4" fill="#d8101a"/></svg><div class="t" style="left:186px;top:580px;">Wyślij odpowiedź • progra...</div><div style="left:326px;top:576px;width:160px;height:22px;background: repeating-conic-gradient(#fff 0 25%, #d4d0c8 0 50%) 0 0/2px 2px; box-shadow: inset 1px 1px #404040, inset -1px -1px #fff, inset 2px 2px #808080;"></div><svg style="left:331px;top:580px" width="16" height="16" viewBox="0 0 16 16"><path d="M1.5 3.5 Q1.5 2 3 2 H6.5 L8 3.5 H13.5 V14.5 H1.5Z" fill="#e8c45c" stroke="#9a7418"/><circle cx="7" cy="7.5" r="3.6" fill="#dff2ff" stroke="#6a7a8a"/><path d="M1.5 14.5 L4.5 8.5 H15.5 L13 14.5Z" fill="#f6dc80" stroke="#9a7418"/></svg><div class="t" style="left:351px;top:581px;font-weight:bold;letter-spacing:0.6px">D:\Windows\System...</div><div style="left:489px;top:576px;width:160px;height:22px;background:#d4d0c8;box-shadow: inset -1px -1px #404040, inset 1px 1px #fff, inset -2px -2px #808080, inset 2px 2px #d4d0c8;"></div><svg style="left:493px;top:579px" width="16" height="16" viewBox="0 0 16 16"><path d="M1.5 3.5 Q1.5 2 3 2 H6.5 L8 3.5 H13.5 V14.5 H1.5Z" fill="#e8c45c" stroke="#9a7418"/><circle cx="7" cy="7.5" r="3.6" fill="#dff2ff" stroke="#6a7a8a"/><path d="M1.5 14.5 L4.5 8.5 H15.5 L13 14.5Z" fill="#f6dc80" stroke="#9a7418"/></svg><div class="t" style="left:513px;top:580px;letter-spacing:0">D:\Pliki rejestru kopia\Re...</div><div style="left:683px;top:576px;width:115px;height:22px;box-shadow: inset -1px -1px #fff, inset 1px 1px #808080;"></div><svg style="left:686px;top:578px" width="16" height="17" viewBox="0 0 16 17"><defs><linearGradient id="gsr" x1="0" y1="0" x2="1" y2="1"><stop offset="0" stop-color="#90f070"/><stop offset="1" stop-color="#18a018"/></linearGradient></defs><path d="M2.5 11.5 L10 7.5 L15.5 12.5 L8 16.5Z" fill="#b8bcc8" stroke="#6a6a78" stroke-width=".8"/><path d="M5.5 11.5 L10 9.2 L12.8 12 L8.3 14.3Z" fill="#3a4478"/><path d="M0.8 3.5 L4.5 0.5 V2.2 Q9.5 2 10.5 7 L7.8 8.2 Q7.5 5 4.5 5.2 V7Z" fill="url(#gsr)" stroke="#1a7a1a" stroke-width=".6"/></svg><svg style="left:703px;top:582px" width="18" height="11" viewBox="0 0 18 11"><defs><linearGradient id="ghd" x1="0" y1="0" x2="0" y2="1"><stop offset="0" stop-color="#f0f0f0"/><stop offset="1" stop-color="#8a8a8a"/></linearGradient></defs><path d="M1 4.5 L5.5 1 H16.5 Q17.5 1 17.2 2 L16.5 6 L12 9.8 H1.8 Q0.8 9.8 0.9 8.8Z" fill="url(#ghd)" stroke="#5a5a5a" stroke-width=".8"/><path d="M1 4.8 H12.5 L17 1.2 M12.5 4.8 L12 9.8" fill="none" stroke="#7a7a7a" stroke-width=".7"/><rect x="8" y="6" width="3" height="1.6" fill="#404040"/></svg><div class="t" style="left:724px;top:580px">PL</div><div style="left:740px;top:579px;width:17px;height:17px;background:#262626;border-radius:2px;border:1px solid #101010"><svg style="left:0;top:0" width="15" height="15"><path d="M4 4 L12.5 12.5" stroke="#c4c4c4" stroke-width="2.2"/><path d="M1.2 3.5 A3 3 0 0 1 3.5 1.2 L3.8 3.8 L6 4.2 A3 3 0 0 1 1.2 3.5Z" fill="#c4c4c4"/><path d="M2.5 12.5 L8 7" stroke="#b0b0b0" stroke-width="1.2"/><path d="M8 7 L12.5 2.5" stroke="#d0d0d0" stroke-width="2.6"/></svg></div><div class="t" style="left:764px;top:580px">14:10</div></body></html>
